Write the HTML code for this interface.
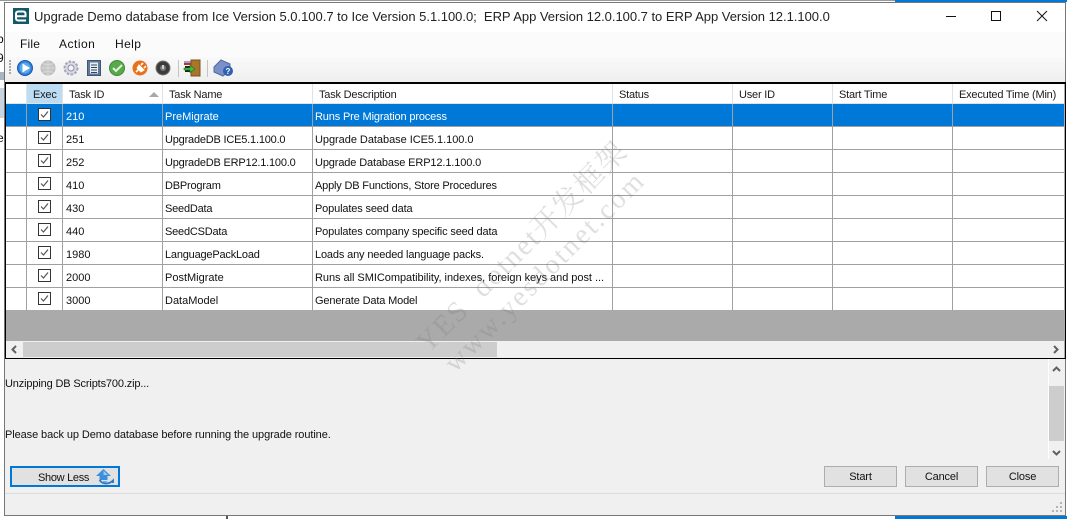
<!DOCTYPE html>
<html>
<head>
<meta charset="utf-8">
<style>
html,body{margin:0;padding:0;width:1067px;height:519px;overflow:hidden;background:#fff;}
body{position:relative;font-family:"Liberation Sans","Noto Sans CJK SC",sans-serif;font-size:11px;color:#111;}
.a{position:absolute;}
.t{position:absolute;white-space:nowrap;line-height:14px;height:14px;}
.h{top:87.5px;color:#1a1a1a;letter-spacing:-.2px;}
.v{position:absolute;top:104px;height:206px;width:1px;background:#a0a0a0;}
.vh{position:absolute;top:84px;height:20px;width:1px;background:#e2e2e2;}
.r{position:absolute;left:6px;width:1058px;height:1px;background:#a0a0a0;}
.cb{position:absolute;left:38px;width:11px;height:11px;border:1px solid #333;background:#fff;}
.cb svg{position:absolute;left:0;top:0;}
.btn{position:absolute;top:466px;width:71px;height:19px;border:1px solid #adadad;background:#e1e1e1;text-align:center;line-height:21px;color:#111;letter-spacing:-.15px;}
.wm{position:absolute;font-family:"Liberation Serif","Noto Serif CJK SC",serif;color:rgba(120,120,120,.24);white-space:nowrap;transform-origin:0 100%;transform:rotate(-45deg);}
.n{letter-spacing:-.2px;}
.d{letter-spacing:-.15px;}
</style>
</head>
<body>
<!-- backdrop -->
<div class="a" style="left:895px;top:0;width:172px;height:2px;background:#0078d7"></div>
<div class="a" style="left:895px;top:516px;width:172px;height:3px;background:#0078d7"></div>
<div class="a" style="left:226px;top:516px;width:2px;height:3px;background:#555"></div>
<div class="a" style="left:0;top:0;width:895px;height:1px;background:#999"></div>
<div class="a" style="left:0;top:32px;width:4px;height:14px;overflow:hidden;font-size:12px;line-height:14px"><span style="position:absolute;left:-3px">b</span></div>
<div class="a" style="left:0;top:51px;width:4px;height:14px;overflow:hidden;font-size:12px;line-height:14px"><span style="position:absolute;left:-3px">9</span></div>
<div class="a" style="left:0;top:131px;width:4px;height:14px;overflow:hidden;font-size:12px;line-height:14px"><span style="position:absolute;left:-3px">e</span></div>
<div class="a" style="left:0;top:72px;width:4px;height:8px;background:#a8b4c0"></div>
<div class="a" style="left:0;top:88px;width:4px;height:30px;background:#c8d4e0"></div>

<!-- window -->
<div class="a" style="left:4px;top:2px;width:1060px;height:512px;border:1px solid #777;background:#f0f0f0"></div>
<div class="a" style="left:5px;top:3px;width:1060px;height:29px;background:#fff"></div>
<div class="a" style="left:5px;top:32px;width:1060px;height:25px;background:#fbfbfb"></div>
<div class="a" style="left:5px;top:57px;width:1060px;height:25px;background:linear-gradient(#f9f9f9,#efefef)"></div>

<!-- title -->
<svg class="a" style="left:13px;top:8px" width="16" height="16" viewBox="0 0 16 16">
<rect width="16" height="16" fill="#125a68"/>
<path d="M3 8.2H12.5V6Q12.5 3.5 10 3.5H5.5Q3 3.5 3 6V10Q3 12.5 5.5 12.5H13" fill="none" stroke="#fff" stroke-width="2"/>
</svg>
<div class="t" style="left:34px;top:9.5px;font-size:13px;letter-spacing:-.023px;color:#222">Upgrade Demo database from Ice Version 5.0.100.7 to Ice Version 5.1.100.0;&nbsp; ERP App Version 12.0.100.7 to ERP App Version 12.1.100.0</div>
<svg class="a" style="left:940px;top:8px" width="115" height="16" viewBox="0 0 115 16">
<path d="M6 8.5H16" stroke="#111" fill="none"/>
<rect x="51.5" y="3.5" width="9" height="9" fill="none" stroke="#111"/>
<path d="M97 3L107 13M107 3L97 13" stroke="#111" fill="none"/>
</svg>

<!-- menu -->
<div class="t" style="left:20px;top:37px;font-size:12px;letter-spacing:.2px">File</div>
<div class="t" style="left:59px;top:37px;font-size:12px;letter-spacing:.5px">Action</div>
<div class="t" style="left:115px;top:37px;font-size:12px;letter-spacing:.4px">Help</div>

<!-- toolbar -->
<svg class="a" style="left:5px;top:57px" width="240" height="24" viewBox="0 0 240 24">
<g fill="#a8a8a8"><rect x="4" y="3" width="2" height="2"/><rect x="4" y="6" width="2" height="2"/><rect x="4" y="9" width="2" height="2"/><rect x="4" y="12" width="2" height="2"/><rect x="4" y="15" width="2" height="2"/></g>
<circle cx="20" cy="11" r="7.5" fill="#2d7fd8" stroke="#1c5aa8"/>
<circle cx="20" cy="11" r="5.5" fill="#5aa9ee"/>
<path d="M17.5 6.5L25 11L17.5 15.5Z" fill="#fff"/>
<circle cx="43" cy="11" r="7" fill="#c6c6c6" stroke="#b8b8b8"/>
<path d="M36 11H50M43 4V18M38 6.5Q43 9 48 6.5M38 15.5Q43 13 48 15.5" stroke="#d8d8d8" fill="none"/>
<circle cx="66" cy="11" r="6.5" fill="#d8d8e6" stroke="#a4a4b8" stroke-width="2" stroke-dasharray="2.5 1.5"/>
<circle cx="66" cy="11" r="3" fill="#f3f3f8" stroke="#9090a5"/>
<rect x="82.5" y="3.5" width="13" height="15" fill="#5d7a98" stroke="#40566e"/>
<path d="M85 5.5H93V16.5H85Z" fill="#e8eef4"/>
<path d="M86 8H92M86 10.5H92M86 13H92M86 15.5H92" stroke="#2f4660"/>
<circle cx="112" cy="11" r="7.5" fill="#58a94a" stroke="#3a8a3a"/>
<path d="M108 11L111 14L117 8" stroke="#dff5d8" stroke-width="2" fill="none"/>
<circle cx="135" cy="11" r="7.5" fill="#ea6f16"/>
<path d="M131 15L134 12M134 8.5L138.5 13L136 14.5L132.5 11ZM136 8L138 6M139 11L141 9" stroke="#fff" stroke-width="1.6" fill="#fff"/>
<circle cx="158" cy="11" r="7" fill="#3c3c3c" stroke="#777"/>
<circle cx="158" cy="11" r="3" fill="#777"/>
<path d="M158 8V12" stroke="#eee" stroke-width="1.5"/>
<rect x="173" y="3" width="1" height="17" fill="#c4c4c4"/>
<rect x="186" y="3" width="9" height="16" fill="#a8752a" stroke="#7a5518"/>
<path d="M179 7H186" stroke="#c03030" stroke-width="2"/>
<path d="M179 5H186" stroke="#3050b0"/>
<rect x="180" y="9" width="6" height="6" fill="#222"/>
<path d="M179 11H185V8.5L190 12L185 15.5V13H179Z" fill="#3fbf3f" stroke="#1a7a1a" stroke-width=".6"/>
<rect x="202" y="3" width="1" height="17" fill="#c4c4c4"/>
<path d="M209 10L216 3L225 7V13L218 19L209 15Z" fill="#7a90c8" stroke="#55689c"/>
<circle cx="223" cy="14" r="5" fill="#2f5fb0"/>
<text x="223" y="17" font-size="8" font-weight="bold" fill="#fff" text-anchor="middle" font-family="Liberation Sans">?</text>
</svg>

<!-- grid -->
<div class="a" style="left:5px;top:82px;width:1059px;height:274px;border:1px solid #000;border-top-width:2px;background:#aaaaaa"></div>
<div class="a" style="left:6px;top:84px;width:1058px;height:226px;background:#fff"></div>
<div class="a" style="left:27px;top:84px;width:35px;height:19px;background:#bcdcf4"></div>
<div class="a" style="left:6px;top:104px;width:1058px;height:22px;background:#0078d7"></div>
<div class="r" style="top:103px;background:#e2e2e2"></div>
<div class="r" style="top:126px"></div><div class="r" style="top:149px"></div><div class="r" style="top:172px"></div><div class="r" style="top:195px"></div><div class="r" style="top:218px"></div><div class="r" style="top:241px"></div><div class="r" style="top:264px"></div><div class="r" style="top:287px"></div>
<div class="v" style="left:26px"></div><div class="v" style="left:62px"></div><div class="v" style="left:162px"></div><div class="v" style="left:312px"></div><div class="v" style="left:612px"></div><div class="v" style="left:732px"></div><div class="v" style="left:832px"></div><div class="v" style="left:952px"></div>
<div class="vh" style="left:26px"></div><div class="vh" style="left:62px"></div><div class="vh" style="left:162px"></div><div class="vh" style="left:312px"></div><div class="vh" style="left:612px"></div><div class="vh" style="left:732px"></div><div class="vh" style="left:832px"></div><div class="vh" style="left:952px"></div>

<div class="t h" style="left:33px">Exec</div>
<div class="t h" style="left:69px">Task ID</div>
<svg class="a" style="left:149px;top:91px" width="10" height="7"><path d="M0 6L5 1L10 6Z" fill="#a8a8a8"/></svg>
<div class="t h" style="left:169px">Task Name</div>
<div class="t h" style="left:319px">Task Description</div>
<div class="t h" style="left:619px">Status</div>
<div class="t h" style="left:739px">User ID</div>
<div class="t h" style="left:839px">Start Time</div>
<div class="t h" style="left:959px">Executed Time (Min)</div>

<div class="cb" style="top:108px"><svg width="11" height="11"><path d="M2 5.5L4.5 8L9 2.5" stroke="#555" stroke-width="1.2" fill="none"/></svg></div>
<div class="cb" style="top:131px"><svg width="11" height="11"><path d="M2 5.5L4.5 8L9 2.5" stroke="#555" stroke-width="1.2" fill="none"/></svg></div>
<div class="cb" style="top:154px"><svg width="11" height="11"><path d="M2 5.5L4.5 8L9 2.5" stroke="#555" stroke-width="1.2" fill="none"/></svg></div>
<div class="cb" style="top:177px"><svg width="11" height="11"><path d="M2 5.5L4.5 8L9 2.5" stroke="#555" stroke-width="1.2" fill="none"/></svg></div>
<div class="cb" style="top:200px"><svg width="11" height="11"><path d="M2 5.5L4.5 8L9 2.5" stroke="#555" stroke-width="1.2" fill="none"/></svg></div>
<div class="cb" style="top:223px"><svg width="11" height="11"><path d="M2 5.5L4.5 8L9 2.5" stroke="#555" stroke-width="1.2" fill="none"/></svg></div>
<div class="cb" style="top:246px"><svg width="11" height="11"><path d="M2 5.5L4.5 8L9 2.5" stroke="#555" stroke-width="1.2" fill="none"/></svg></div>
<div class="cb" style="top:269px"><svg width="11" height="11"><path d="M2 5.5L4.5 8L9 2.5" stroke="#555" stroke-width="1.2" fill="none"/></svg></div>
<div class="cb" style="top:292px"><svg width="11" height="11"><path d="M2 5.5L4.5 8L9 2.5" stroke="#555" stroke-width="1.2" fill="none"/></svg></div>

<div class="t" style="left:66px;top:109.5px;color:#fff">210</div><div class="t" style="left:165px;top:109.5px;color:#fff">PreMigrate</div><div class="t d" style="left:315px;top:109.5px;color:#fff">Runs Pre Migration process</div>
<div class="t" style="left:66px;top:132.5px">251</div><div class="t n" style="left:165px;top:132.5px">UpgradeDB ICE5.1.100.0</div><div class="t" style="left:315px;top:132.5px;letter-spacing:-.04px">Upgrade Database ICE5.1.100.0</div>
<div class="t" style="left:66px;top:155.5px">252</div><div class="t n" style="left:165px;top:155.5px">UpgradeDB ERP12.1.100.0</div><div class="t" style="left:315px;top:155.5px;letter-spacing:-.13px">Upgrade Database ERP12.1.100.0</div>
<div class="t" style="left:66px;top:178.5px">410</div><div class="t n" style="left:165px;top:178.5px">DBProgram</div><div class="t" style="left:315px;top:178.5px;letter-spacing:-.18px">Apply DB Functions, Store Procedures</div>
<div class="t" style="left:66px;top:201.5px">430</div><div class="t n" style="left:165px;top:201.5px">SeedData</div><div class="t d" style="left:315px;top:201.5px">Populates seed data</div>
<div class="t" style="left:66px;top:224.5px">440</div><div class="t n" style="left:165px;top:224.5px">SeedCSData</div><div class="t d" style="left:315px;top:224.5px">Populates company specific seed data</div>
<div class="t" style="left:66px;top:247.5px">1980</div><div class="t n" style="left:165px;top:247.5px">LanguagePackLoad</div><div class="t d" style="left:315px;top:247.5px">Loads any needed language packs.</div>
<div class="t" style="left:66px;top:270.5px">2000</div><div class="t" style="left:165px;top:270.5px">PostMigrate</div><div class="t" style="left:315px;top:270.5px;letter-spacing:-.04px">Runs all SMICompatibility, indexes, foreign keys and post ...</div>
<div class="t" style="left:66px;top:293.5px">3000</div><div class="t" style="left:165px;top:293.5px">DataModel</div><div class="t d" style="left:315px;top:293.5px">Generate Data Model</div>

<!-- h scrollbar -->
<div class="a" style="left:6px;top:341px;width:1058px;height:17px;background:#f0f0f0"></div>
<div class="a" style="left:23px;top:342px;width:474px;height:15px;background:#cdcdcd"></div>
<svg class="a" style="left:10px;top:345px" width="8" height="9"><path d="M6 1L2.5 4.5L6 8" stroke="#606060" stroke-width="2" fill="none"/></svg>
<svg class="a" style="left:1052px;top:345px" width="8" height="9"><path d="M2 1L5.5 4.5L2 8" stroke="#606060" stroke-width="2" fill="none"/></svg>

<!-- log -->
<div class="t" style="left:5px;top:376.5px;letter-spacing:-.15px">Unzipping DB Scripts700.zip...</div>
<div class="t" style="left:5px;top:427.5px;letter-spacing:-.09px">Please back up Demo database before running the upgrade routine.</div>
<div class="a" style="left:1048px;top:359px;width:1px;height:100px;background:#fff"></div>
<div class="a" style="left:1049px;top:386px;width:15px;height:55px;background:#cdcdcd"></div>
<svg class="a" style="left:1052px;top:365px" width="9" height="8"><path d="M1 6L4.5 2.5L8 6" stroke="#606060" stroke-width="2" fill="none"/></svg>
<svg class="a" style="left:1052px;top:449px" width="9" height="8"><path d="M1 2L4.5 5.5L8 2" stroke="#606060" stroke-width="2" fill="none"/></svg>

<!-- buttons -->
<div class="a" style="left:10px;top:466px;width:106px;height:17px;border:2px solid #0078d7;background:#e1e1e1"></div>
<div class="t" style="left:38px;top:470.5px;letter-spacing:-.3px">Show Less</div>
<svg class="a" style="left:95px;top:468px" width="20" height="17" viewBox="0 0 20 17">
<path d="M1 8L8.5 1L16 8H12.5V12H4.5V8Z" fill="#3d8edb"/>
<path d="M8.5 2.5L13 7H8.5Z" fill="#9cc9f0"/>
<path d="M4.500 12Q7 15.500 11 15.500Q15 15.500 18 12.500L18 15" stroke="#2a74c4" stroke-width="1.8" fill="none"/>
<path d="M8 13H13L11 14.500H8Z" fill="#6db3ec"/>
</svg>
<div class="btn" style="left:824px">Start</div>
<div class="btn" style="left:905px">Cancel</div>
<div class="btn" style="left:986px">Close</div>

<!-- status line -->
<div class="a" style="left:5px;top:493px;width:1060px;height:1px;background:#dcdcdc"></div>
<svg class="a" style="left:1051px;top:501px" width="12" height="12" fill="#b4b4b4">
<rect x="9" y="1" width="2" height="2"/><rect x="5" y="5" width="2" height="2"/><rect x="9" y="5" width="2" height="2"/><rect x="1" y="9" width="2" height="2"/><rect x="5" y="9" width="2" height="2"/><rect x="9" y="9" width="2" height="2"/>
</svg>

<!-- watermark -->
<div class="wm" style="left:433px;top:327px;font-size:29px;line-height:32px;letter-spacing:1.8px">YES&nbsp; dotnet开发框架</div>
<div class="wm" style="left:461px;top:347px;font-size:28px;line-height:32px;letter-spacing:2.5px">www.yesdotnet.com</div>
</body>
</html>
